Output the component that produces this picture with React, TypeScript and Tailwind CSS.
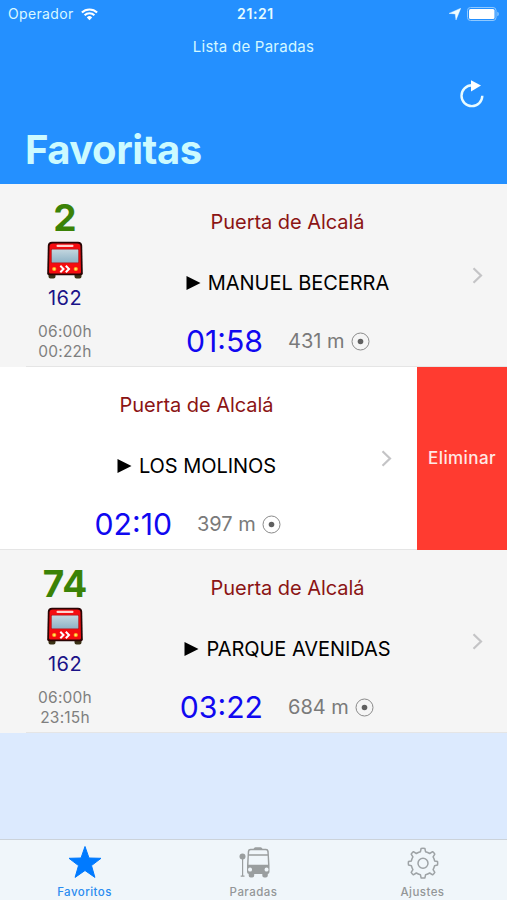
import { clsx } from 'clsx'

interface Stop {
  line: string
  code: string
  first: string
  last: string
  name: string
  destination: string
  arrival: string
  distance: string
}

const stops: Stop[] = [
  {
    line: '2',
    code: '162',
    first: '06:00h',
    last: '00:22h',
    name: 'Puerta de Alcalá',
    destination: 'MANUEL BECERRA',
    arrival: '01:58',
    distance: '431 m',
  },
  {
    line: '',
    code: '',
    first: '',
    last: '',
    name: 'Puerta de Alcalá',
    destination: 'LOS MOLINOS',
    arrival: '02:10',
    distance: '397 m',
  },
  {
    line: '74',
    code: '162',
    first: '06:00h',
    last: '23:15h',
    name: 'Puerta de Alcalá',
    destination: 'PARQUE AVENIDAS',
    arrival: '03:22',
    distance: '684 m',
  },
]

function BusFront() {
  return (
    <svg width="38" height="38" viewBox="0 0 38 38">
      <path d="M2.500 32h7v3.500q0 2-2 2h-3q-2 0-2-2zM28.500 32h7v3.500q0 2-2 2h-3q-2 0-2-2z" fill="#3a3115" />
      <path d="M6 .8h26q4 0 4.200 4L36.800 32.500q0 1.800-1.800 1.800H3q-1.800 0-1.800-1.800L1.800 4.800Q2 .8 6 .8z" fill="#2a0505" />
      <path d="M6.800 2.500h24.400q3.200 0 3.300 3L35 31q0 1.500-1.500 1.500h-29Q3 32.500 3 31L3.500 5.500q.1-3 3.300-3z" fill="#f50c10" />
      <rect x="10.500" y="3.800" width="17" height="2.200" rx="1" fill="#ffd3cf" />
      <rect x="4.800" y="7.800" width="28.400" height="14.400" rx="1" fill="#b5161a" />
      <rect x="5.700" y="8.600" width="26.600" height="12.800" rx=".5" fill="url(#glass)" />
      <circle cx="8.200" cy="28" r="2.100" fill="#ffb01f" />
      <circle cx="29.800" cy="28" r="2.100" fill="#ffb01f" />
      <circle cx="8.200" cy="28" r="1" fill="#ffe97a" />
      <circle cx="29.800" cy="28" r="1" fill="#ffe97a" />
      <path d="m14.300 24.700 3.200 3.300-3.200 3.300M19.800 24.700l3.200 3.300-3.200 3.300" fill="none" stroke="#fff" strokeWidth="2" />
      <defs>
        <linearGradient id="glass" x1="0" y1="0" x2="0" y2="1">
          <stop offset="0" stopColor="#c3d6df" />
          <stop offset="1" stopColor="#8fb3c6" />
        </linearGradient>
      </defs>
    </svg>
  )
}

function StatusBar() {
  return (
    <div className="grid h-7 grid-cols-3 items-center px-2">
      <div className="flex items-center gap-[7px] text-[#d9f8ff]">
        <span className="text-[14px] leading-5 tracking-[0.35px]">Operador</span>
        <svg width="17" height="13" viewBox="0 0 17 13" fill="none" stroke="#fff" strokeWidth="2.100">
          <path d="M.9 4.600a10.700 10.700 0 0 1 15.200 0" />
          <path d="M3.600 7.300a6.900 6.900 0 0 1 9.800 0" />
          <path d="M5.800 9.400a3.900 3.900 0 0 1 5.400 0L8.500 12.200z" fill="#fff" stroke="none" />
        </svg>
      </div>
      <span className="pl-[4px] text-center text-[14px] font-semibold leading-5 tracking-[0.6px] text-[#e6fcff]">
        21:21
      </span>
      <div className="flex items-center justify-end gap-[6px]">
        <svg width="12" height="12" viewBox="0 0 12 12">
          <path d="M11.800.2 7 12 6.200 5.900 0 5.400z" fill="#f0fdff" stroke="#f0fdff" strokeWidth=".4" />
        </svg>
        <svg width="32" height="14" viewBox="0 0 32 14">
          <rect x=".5" y=".5" width="28.500" height="13" rx="3" fill="none" stroke="#8fc9ff" />
          <rect x="2" y="2" width="25.500" height="10" rx="1.500" fill="#fff" />
          <path d="M30.300 4.700q1.500.6 1.500 2.300t-1.500 2.300z" fill="#8fc9ff" />
        </svg>
      </div>
    </div>
  )
}

function Header() {
  return (
    <header className="h-[184px] shrink-0 bg-[#2490ff]">
      <StatusBar />
      <p className="pt-[9px] text-center text-[15px] leading-5 tracking-[0.25px] text-[#d4f8ff]">Lista de Paradas</p>
      <div className="flex h-[51px] items-end justify-end pr-[23px]">
        <svg width="25" height="28" viewBox="0 0 25 28">
          <path d="M23.300 15.700a10.400 10.400 0 1 1-10.400-10.400" fill="none" stroke="#e9fbff" strokeWidth="2.400" />
          <path d="M12 .3v11.200L22 5.600z" fill="#fff" />
        </svg>
      </div>
      <h1 className="pl-[25px] pt-[18px] text-[40px] font-bold leading-[48px] tracking-[-0.5px] text-[#ccfaff]">
        Favoritas
      </h1>
    </header>
  )
}

function LineInfo({ stop }: { stop: Stop }) {
  return (
    <div className="flex w-[130px] shrink-0 flex-col items-center">
      <div className="mt-[14px] text-[37px] font-bold leading-10 text-[#3b8207]">{stop.line}</div>
      <div className="mt-[3px] h-[38px]">
        <BusFront />
      </div>
      <div className="mt-[7px] text-[20px] leading-6 tracking-[0.5px] text-[#1b1388]">{stop.code}</div>
      <div className="mt-[12px] text-center text-[15.500px] leading-[19.500px] tracking-[0.2px] text-[#7f7f7f]">
        <div>{stop.first}</div>
        <div>{stop.last}</div>
      </div>
    </div>
  )
}

function StopRow({ stop, swiped }: { stop: Stop; swiped?: boolean }) {
  return (
    <li className={clsx('flex h-[182px]', swiped ? 'bg-white' : 'bg-[#f5f5f5]')}>
      {swiped ? <div className="w-[39px] shrink-0" /> : <LineInfo stop={stop} />}
      <div className="flex w-[315px] shrink-0 flex-col">
        <div className="mt-[24px] text-center text-[20px] leading-7 tracking-[-0.05px] text-[#8b1414]">{stop.name}</div>
        <div className="mt-[33px] flex items-center justify-center gap-[7px] text-[20px] leading-7 tracking-[-0.05px] text-black">
          <svg width="15" height="14" viewBox="0 0 15 14">
            <path d="M.5 0v14L14.500 7z" />
          </svg>
          <span>{stop.destination}</span>
        </div>
        <div className="mt-[26px] flex h-9 items-center">
          <span className="w-[133px] text-right text-[30.200px] leading-9 text-[#1008f0]">{stop.arrival}</span>
          <span className="ml-[25px] text-[20px] text-[#7a7a7a]">{stop.distance}</span>
          <svg className="ml-[6px]" width="19" height="19" viewBox="0 0 19 19">
            <circle cx="9.500" cy="9.500" r="8.500" fill="none" stroke="#8a8a8a" />
            <circle cx="9.500" cy="9.500" r="2.800" fill="#606060" />
          </svg>
        </div>
      </div>
      <div className={clsx('shrink-0 pl-[27px] pt-[83px]', swiped ? 'w-[63px]' : 'w-[62px]')}>
        <svg width="11" height="17" viewBox="0 0 11 17">
          <path d="m1.500 1.200 7.500 7.300-7.500 7.300" fill="none" stroke="#c4c4c6" strokeWidth="2.200" />
        </svg>
      </div>
      {swiped && (
        <button className="flex flex-1 items-center justify-center bg-[#ff3b30] pt-[2px] text-[17px] font-medium tracking-[0.4px] text-[#ffe9e6]">
          Eliminar
        </button>
      )}
    </li>
  )
}

// Hairline between rows, inset on the left unless the row is swiped
function Divider({ full }: { full?: boolean }) {
  return (
    <li className="flex h-px bg-[#f5f5f5]">
      <div className={clsx('flex-1 bg-[#e5e5e5]', full ? 'ml-0' : 'ml-[26px]')} />
      {full && <div className="w-[90px] bg-[#ff3b30]" />}
    </li>
  )
}

function TabBar() {
  return (
    <nav className="grid h-[61px] shrink-0 grid-cols-3 border-t border-[#ccd3da] bg-[#f0f6fa] text-[11.500px] font-medium tracking-[0.45px] text-[#949698]">
      <div className="flex flex-col items-center pt-[4px] text-[#2b8cf0]">
        <svg width="36" height="36" viewBox="0 0 36 36">
          <path d="m18 2.500 4 11.500 12 .3-9.500 7.300 3.400 11.800L18 26.500 8.100 33.400l3.400-11.800L2 14.300l12-.3z" fill="#007aff" stroke="#007aff" strokeLinejoin="round" />
        </svg>
        <span className="mt-[4px] leading-4">Favoritos</span>
      </div>
      <div className="flex flex-col items-center pt-[4px]">
        <svg width="32" height="36" viewBox="0 0 32 36" fill="#9a9e9f">
          <circle cx="4.500" cy="12.500" r="3" />
          <path d="M4 12.500h1.200v19h1.300v1.200H2.700v-1.200H4z" />
          <path d="M15.500 5q.5-1.700 2-1.700h5q1.500 0 2 1.700z" />
          <path d="M10.700 29h5.500v2.500q0 2-2 2h-1.500q-2 0-2-2zM24.300 29h5.500v2.500q0 2-2 2h-1.500q-2 0-2-2z" />
          <path fillRule="evenodd" d="M12.500 4.700h15.500q2.300 0 2.700 2.300L31.500 21v6.500q0 2.500-2.500 2.500H11.500Q9 30 9 27.500V21l.8-14q.3-2.300 2.700-2.300zM13 6.200q-1.600 0-1.700 1.300L11 10.300h18.500l-.3-2.800q-.1-1.300-1.700-1.300zM10.900 11.700l-.4 9h19.500l-.4-9zM12 23.600a2 2 0 1 0 .1 4 2 2 0 0 0-.1-4zm16.500 0a2 2 0 1 0 .1 4 2 2 0 0 0-.1-4z" />
        </svg>
        <span className="mt-[4px] leading-4">Paradas</span>
      </div>
      <div className="flex flex-col items-center pt-[4px]">
        <svg width="34" height="36" viewBox="-17 -18 34 36" fill="none" stroke="#9ea3a6" strokeWidth="1.500" strokeLinejoin="round">
          <path d="M-1.900-13.500Q0-13.900 1.900-13.500L2.600-10.200Q4.800-9.700 6.700-8.500L9.600-10.300Q11-9.200 11.800-7.900L10.100-5.100Q11.200-3.200 11.600-1.100L14.500-.5Q14.900 1.300 14.500 3L11.600 3.700Q11.200 5.700 10.100 7.600L11.800 10.400Q10.900 11.800 9.600 12.800L6.700 11Q4.800 12.200 2.600 12.700L1.900 15.900Q0 16.300-1.900 15.900L-2.600 12.700Q-4.800 12.200-6.700 11L-9.600 12.800Q-10.900 11.800-11.800 10.400L-10.100 7.600Q-11.200 5.700-11.600 3.700L-14.500 3Q-14.900 1.300-14.500-.5L-11.600-1.100Q-11.200-3.200-10.100-5.100L-11.800-7.900Q-10.900-9.300-9.600-10.300L-6.700-8.500Q-4.800-9.700-2.600-10.200z" />
          <circle cx="0" cy="1.200" r="5" />
        </svg>
        <span className="mt-[4px] leading-4">Ajustes</span>
      </div>
    </nav>
  )
}

export default function App() {
  return (
    <div className="flex h-[900px] w-[507px] flex-col overflow-hidden bg-[#dceafe] font-['Inter',sans-serif]">
      <Header />
      <ul className="flex-1">
        <StopRow stop={stops[0]} />
        <Divider />
        <StopRow stop={stops[1]} swiped />
        <Divider full />
        <StopRow stop={stops[2]} />
        <Divider />
      </ul>
      <TabBar />
    </div>
  )
}
